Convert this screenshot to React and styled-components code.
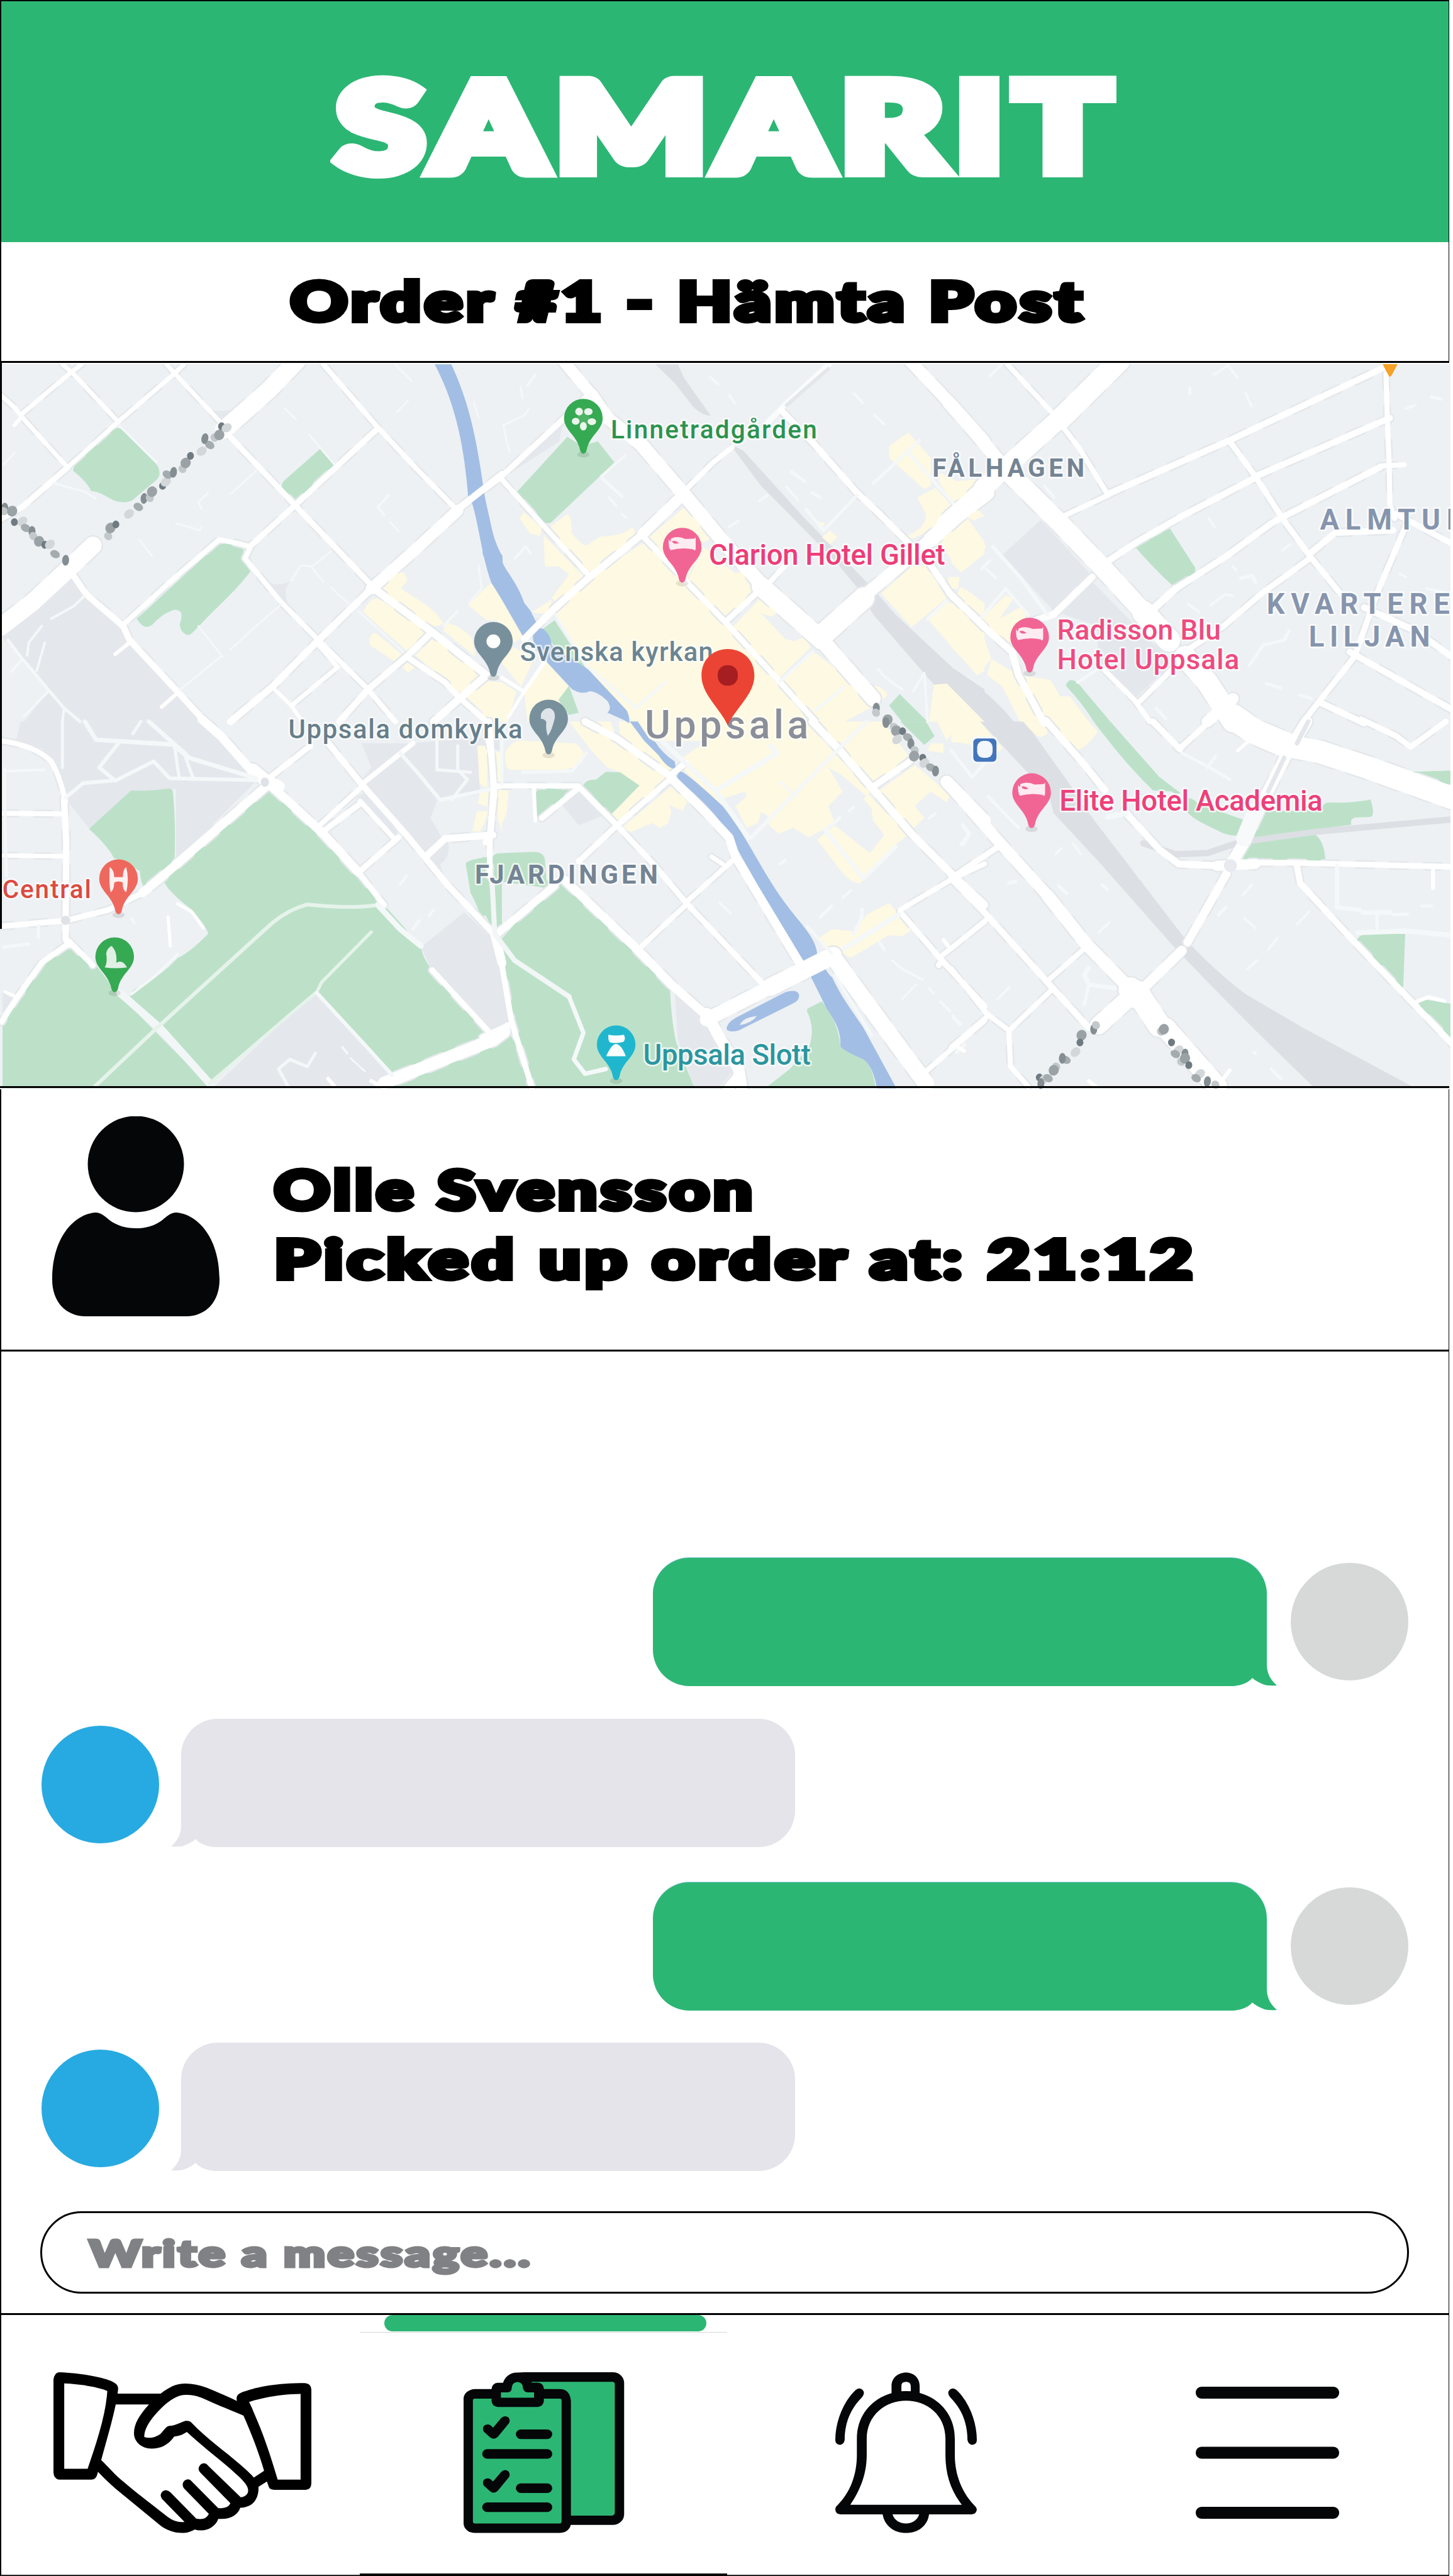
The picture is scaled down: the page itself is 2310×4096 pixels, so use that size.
import React, { useLayoutEffect, useRef, useState } from "react";
import styled, { createGlobalStyle } from "styled-components";

const GREEN = "#2cb674";
const INK = "#050608";

const GlobalStyle = createGlobalStyle`
  * { box-sizing: border-box; }
  body { margin: 0; background: #fff; }
`;

const Screen = styled.main`
  width: 2310px;
  height: 4096px;
  display: flex;
  flex-direction: column;
  background: #fff;
  overflow: hidden;
  font-family: Lato, "Open Sans", sans-serif;
`;

const Section = styled.section`
  width: 2304px;
  flex: none;
  border-left: 2px solid #000;
  border-right: 1px solid #000;
`;

const Header = styled(Section)`
  height: 385px;
  border-top: 2px solid #000;
  background: ${GREEN};
  padding: 102px 0 0 533px;
`;

const OrderBar = styled(Section)`
  height: 192px;
  border-bottom: 3px solid #000;
  padding: 29px 0 0 460px;
`;

const Stretch = styled.div`
  width: max-content;
  white-space: nowrap;
  transform-origin: 0 50%;
  font-weight: 900;
  font-size: ${(p) => p.$size}px;
  line-height: ${(p) => p.$line}px;
  color: ${(p) => p.$color};
  -webkit-text-stroke: ${(p) => p.$stroke}px ${(p) => p.$color};
  letter-spacing: ${(p) => p.$spacing || 0}px;
`;

/* Heavy display text, widened to the given width. */
function Display({ width, size, line, color = "#000", stroke, spacing, children }) {
  const ref = useRef(null);
  const [scale, setScale] = useState(1);
  useLayoutEffect(() => {
    setScale(width / ref.current.offsetWidth);
  }, [width]);
  return (
    <Stretch
      ref={ref}
      $size={size}
      $line={line}
      $color={color}
      $stroke={stroke}
      $spacing={spacing}
      style={{ transform: `scaleX(${scale})` }}
    >
      {children}
    </Stretch>
  );
}

/* ---------- map ---------- */

const MapSection = styled.section`
  position: relative;
  flex: none;
  width: 2306px;
  height: 1153px;
  margin-top: 2px;
  margin-bottom: 0;
`;

const MapCanvas = styled.svg`
  display: block;
  width: 2306px;
  height: 1153px;
`;

const MapEdge = styled.div`
  position: absolute;
  left: 0;
  bottom: 2px;
  width: 2304px;
  height: 3px;
  background: #000;
`;

const MapSide = styled.div`
  position: absolute;
  left: 0;
  top: -2px;
  width: 3px;
  height: 900px;
  background: #000;
`;

const W = "#ffffff";
const P = "#f5f8f9";
const G = "#e6f3eb";

const tiles = [
  {
    x: 0, y: 920, sy: 0.6059,
    lav: [
      "M8 1200L200 975Q220 960 230 975L385 1165L405 1230L640 1568L75 1568L150 1440L110 1350L8 1210Z",
      "M640 230Q690 250 740 230L700 280Z",
      "M835 970Q870 995 910 965Q880 1000 900 1065L860 1040Z",
    ],
    rail: [],
    green: [
      "M365 312Q375 312 385 325L487 465Q500 485 498 515Q495 530 480 545L415 620Q400 635 370 628C340 620 320 585 285 583C275 550 250 520 228 495Q230 475 245 455L355 320Z",
      "M1000 402Q1040 445 1043 475C1010 500 970 580 935 612Q920 625 905 605L880 565Q878 550 890 535Z",
      "M705 806Q730 808 761 833C755 870 760 890 783 925C730 1020 690 1060 625 1155C600 1190 595 1200 583 1197Q560 1180 562 1150Q570 1115 565 1100Q550 1080 530 1098Q500 1115 475 1155Q450 1180 427 1128C500 1040 590 920 670 825Q685 807 705 806Z",
    ],
    yellow: [
      "M1250 925Q1275 940 1270 970L1252 998C1320 1060 1365 1090 1385 1150Q1360 1165 1340 1155L1193 1010Q1200 970 1250 925Z",
      "M1180 1040L1338 1180L1270 1265L1135 1100Q1150 1045 1180 1040Z",
      "M1175 1190L1255 1280L1232 1310L1155 1240Q1150 1190 1175 1190Z",
      "M1297 1285L1355 1208L1515 1345L1440 1450L1370 1365Z",
      "M1395 1145Q1440 1160 1475 1210L1485 1290L1385 1180Z",
      "M1275 1315L1300 1330L1275 1360L1257 1335Z",
      "M1455 1460L1500 1400H1568V1460L1530 1480L1535 1515L1515 1535Z",
      "M1530 980L1568 1050V1135L1520 1135L1490 1100L1462 1070L1500 1020Z",
    ],
    water: [
      "M1358 40H1410C1460 190 1485 320 1510 565C1520 660 1540 800 1570 860V1050L1535 975C1505 860 1495 720 1475 635L1462 600C1450 380 1420 200 1358 40Z",
    ],
    roads: [
      [7, "195,40 225,75 365,280", W], [7, "255,40 222,75 70,250", W], [7, "5,175 45,225 68,265 210,480", W],
      [6, "68,265 45,300", W],
      [7, "520,40 545,78 690,290", W], [7, "575,40 545,80 370,285 212,480", W], [9, "212,480 70,650 5,700", W],
      [28, "928,25 840,150 700,320", W], [10, "280,800 215,915", P], [28, "290,815 210,920 100,1060 0,1165", W],
      [9, "690,290 705,330 920,640 1160,985", W], [12, "1160,990 1350,1185 1520,1370", W],
      [8, "1010,40 1180,310 1300,485 1425,660", W],
      [9, "1180,315 1050,480 920,645 780,820", W], [8, "780,820 740,805 685,790 540,960 380,1160", W],
      [8, "780,830 765,870 880,1060 995,1220 1150,1430 1235,1568", W],
      [11, "1570,510 1430,660", W], [18, "1430,665 1300,830 1160,1000", W], [11, "1160,1000 995,1220 850,1420 720,1568", W],
      [10, "230,945 270,1025 385,1160 405,1220 555,1440 640,1568", W], [6, "405,1230 360,1280", W], [6, "555,1445 505,1505", W],
      [6, "850,1420 910,1500 945,1568", W], [7, "995,1240 1055,1335 910,1500", W],
      [12, "1520,1370 1435,1470 1355,1568", W], [9, "1270,1290 1390,1400 1435,1465 1520,1568", W],
      [10, "1350,1185 1270,1290 1150,1430 1060,1568", W],
      [5, "25,1220 70,1300 150,1430 200,1510 250,1568", P], [4, "200,1510 195,1568", P], [4, "85,1285 90,1230 130,1160", P],
      [4, "115,1350 140,1230", P], [4, "160,1128 230,1075 265,1030", P], [4, "150,1440 75,1545", P], [4, "70,1300 35,1355", P],
      [3, "720,1260 800,1160 880,1065", P], [3, "690,1290 560,1435", P], [3, "620,1160 695,1290", P],
      [3, "370,300 490,460", P], [3, "165,548 265,585 300,615", P], [3, "720,595 805,490", P], [3, "965,340 1045,470", P],
      [3, "910,965 940,900 975,905 1035,840", P], [3, "975,910 1010,970", P], [3, "1035,995 1090,1065", P],
      [3, "550,720 625,750 630,735", P], [3, "1120,1095 1260,1270", P], [4, "1385,1160 1430,1095", P],
      [3, "1495,900 1505,1000 1465,1060", P], [3, "1235,40 1285,110", P], [3, "435,790 475,860", P],
      [3, "890,230 925,275", P], [3, "1275,195 1240,245", P], [3, "650,590 620,630 630,660", P], [4, "1215,600 1180,650 1200,685", P],
      [3, "10,470 45,420", P], [3, "1220,715 1245,755", P], [3, "1480,200 1495,270", P],
    ],
    blobs: "15,655 12,668 38,668 45,715 70,712 80,740 100,755 104,775 122,797 140,812 156,810 172,852 205,878 338,775 345,740 362,725 403,680 432,650 450,614 468,612 475,585 508,560 518,543 523,512 542,502 570,488 580,462 595,432 630,412 655,385 640,358 670,354 685,342 692,305 708,312",
  },
  {
    x: 1250, y: 920, sy: 0.6059,
    lav: ["M250 295L240 370L70 520L200 350Z"],
    rail: [
      "M540 40H610L630 100L713 260Q690 262 660 225L600 120Z",
      "M770 378L815 410L1000 690L1085 810L1220 1000L1290 1110L1470 1340L1568 1430V1568H1510L1220 1110L1180 1010L1100 880L1000 740L870 560Z",
    ],
    green: [
      "M265 350L310 390L360 370L412 460L215 715Q203 725 192 715L108 585Z",
      "M225 1135L325 1345Q300 1345 270 1310L180 1180Z",
      "M270 1415L300 1530L270 1540L237 1475Z",
      "M1303 1450L1390 1568H1310L1270 1500Z",
    ],
    yellow: [
      "M500 805L520 810L630 960L765 1160L1005 1540L1010 1568H470L330 1340L225 1110L330 960Z",
      "M635 645L725 780L690 800L640 960L520 780Z",
      "M690 820L790 935L830 915L858 1000L765 1125L640 970Z",
      "M875 1030L920 1100L905 1120L870 1105L945 1215L975 1225L1005 1205L1025 1250L925 1385L780 1165Z",
      "M1030 1265L1160 1400L1180 1430L1225 1500L1130 1568H1040L930 1395Z",
      "M130 672L185 740L180 775L150 765L115 700Z",
      "M265 680Q280 700 278 760Q310 815 325 815L370 775Q430 780 470 735L480 780L325 940L215 760L215 730Z",
      "M190 770L325 960L235 1060L215 1040L270 940L240 905L195 905Z",
      "M215 1045L210 1110L155 1100Z",
      "M1330 332L1355 370L1400 440L1400 560L1380 575L1270 440L1270 390Z",
      "M1430 505L1480 540L1568 530V590L1480 660L1425 540Z",
      "M1415 568L1475 660L1400 750L1320 800L1315 780Q1390 740 1385 680L1358 610Z",
      "M1515 700L1568 800V850L1495 930L1423 800L1500 720Z",
      "M1385 900L1450 1040L1340 1165L1245 1020L1340 905Z",
      "M1450 1050L1568 1190V1350L1545 1370L1393 1135Z",
      "M1490 995L1568 1060V1120L1490 1030Z", "M1455 950H1490L1485 1000H1455Z", "M1540 655L1568 690L1530 705Z",
      "M0 1010L30 975L125 1205L100 1230L50 1145L0 1100Z",
      "M130 1440L200 1310L275 1430L237 1475L265 1568H140Z",
      "M0 1395L60 1400L105 1440L80 1568H0Z", "M50 1300L100 1250L160 1300L120 1420Z",
      "M1215 1415Q1240 1410 1265 1450L1235 1500Z", "M1410 1410L1450 1405L1568 1568H1395Z",
      "M1085 750L1108 780L1085 810L1060 780Z", "M1040 710L1070 720L1055 750Z",
    ],
    water: [
      "M0 550L5 600C25 700 35 830 75 920C105 980 120 1020 130 1060L150 1095L170 1150L127 1205L30 975C15 920 5 860 0 850Z",
      "M157 1200Q165 1160 190 1172Q215 1200 215 1240L330 1345L450 1520Q460 1545 458 1575L440 1560L390 1530Q405 1510 390 1480Q360 1440 335 1438Q310 1455 280 1430L205 1320L160 1250Z",
    ],
    roads: [
      [18, "255,30 340,170", W], [20, "340,170 390,270 500,390", W], [22, "500,390 625,590 740,780 870,980", W],
      [30, "870,990 1060,1220", W], [24, "1060,1220 1220,1470", W],
      [9, "0,580 55,525 240,290 320,185", W], [8, "55,525 200,745 330,940", W],
      [17, "625,600 500,765", W], [11, "500,765 330,955 220,1090 130,1215", W],
      [9, "500,775 630,960 760,1145 920,1385 1040,1568", W], [9, "870,1000 760,1140", W],
      [8, "625,590 720,460 780,395", W],
      [9, "1090,30 940,220 890,290", "#fafcfc"], [6, "1080,60 950,215", "#e3e7ea"],
      [10, "935,240 1035,380 1170,590 1240,680 1320,790 1390,880 1460,1020 1568,1160", W],
      [19, "1335,25 1480,235 1568,370", W],
      [24, "1575,590 1480,690 1400,790", W], [20, "1400,790 1210,1010", W], [34, "1190,1040 1060,1200", W],
      [8, "885,990 945,900", W],
      [5, "1220,550 1330,410 1365,365", P], [5, "1325,410 1480,650", P], [5, "1170,600 1065,750 1010,660", P], [5, "930,1395 1030,1270", P],
      [5, "375,530 435,605", P], [4, "370,520 445,430", P], [5, "325,1330 480,1510", P], [5, "480,1510 570,1400", P],
      [5, "1040,1520 1130,1420", P], [6, "60,1380 130,1440 195,1310", W], [5, "130,1440 80,1550", W],
      [5, "1450,1050 1390,1130", P], [4, "225,1105 325,1330", P],
      [4, "165,85 140,130", P], [3, "118,135 125,185", P], [3, "65,300 130,260 145,230", P], [3, "65,300 75,370 85,415", P],
      [4, "770,170 788,208", P], [4, "710,95 735,125", P], [4, "1160,165 1188,205", P], [4, "1225,258 1255,298", P], [4, "1345,1440 1380,1360 1390,1568", P],
      [4, "1235,1345 1260,1380 1310,1430", P], [4, "395,610 418,645", P], [4, "435,680 448,695", P], [4, "950,565 985,620", P], [4, "865,625 890,600", P],
      [4, "770,735 800,710", P], [4, "100,870 135,820 150,850", P], [5, "965,500 1005,540", P], [5, "1030,590 1055,610", P],
    ],
    blobs: "1230,1510 1229,1530 1265,1560",
  },
  {
    x: 2464, y: 920, sy: 0.6059,
    lav: ["M280 705L430 930L320 1095L160 855Z", "M440 970L570 1150L480 1170L330 1100Z", "M455 1170L600 1200L700 1310L580 1460L460 1330Z"],
    rail: ["M0 1335Q120 1440 195 1568H85L0 1430Z"],
    green: [
      "M683 742L762 910V932L697 994Q630 910 575 822Z",
      "M375 1390Q390 1392 400 1410L497 1568H445Q410 1490 358 1415Q362 1392 375 1390Z",
    ],
    yellow: [
      "M0 540L30 560L60 540L118 533L90 590L25 640L0 600Z", "M50 700L110 820L30 930L0 890V720Z", "M70 655L92 670L75 710L50 695Z",
      "M30 995Q90 1030 100 1085L90 1125L10 1040Z", "M170 1028L195 1040L150 1130L220 1075L235 1110L185 1230L150 1220L95 1125Z",
      "M0 1045L95 1180L125 1300L85 1368L0 1250Z", "M125 1300L210 1370L300 1568H215L160 1420L112 1368Z",
      "M215 1370L310 1390L340 1460L370 1460L430 1568H300Z",
    ],
    water: [],
    roads: [
      [21, "-10,200 80,340 170,490", W], [30, "170,490 340,720 480,920 600,1100", W], [36, "600,1100 680,1220", W], [34, "730,1290 800,1400 880,1568", W],
      [34, "525,25 340,275", W], [30, "340,270 170,480 100,570", W], [26, "110,560 -20,720", W],
      [8, "175,40 310,240", W], [8, "350,310 400,400 490,600", W], [8, "350,690 490,600", W], [10, "490,595 870,365 1350,55", W],
      [9, "870,370 950,520 1035,700 1120,860 1215,1020", W], [10, "480,890 580,800 720,690 950,525", W], [10, "950,520 1370,270", W],
      [12, "620,1100 700,1000", W], [10, "700,1000 860,860 1000,720 1040,690 1340,480", W], [8, "1340,475 1415,470", W],
      [8, "1358,80 1362,265 1368,470 1370,640 1385,700", W], [10, "1120,850 1200,760 1380,750", W],
      [9, "1120,870 970,1020 850,1160 740,1260", W], [8, "700,1330 590,1480", W],
      [9, "1420,730 1330,1020 1260,1290 1150,1480 1100,1568", W], [9, "1390,680 1568,810", W], [10, "1290,1080 1450,1180 1568,1295", W],
      [10, "1245,1270 1400,1390 1568,1520", W], [10, "1150,1485 1290,1575", W], [11, "440,950 320,1110 230,1150", W],
      [8, "480,1350 575,1480 620,1568", W], [11, "-5,1020 100,1160 190,1270 210,1370 290,1575", W], [18, "880,1470 800,1568", W],
      [5, "1055,1180 1040,1220 975,1240 930,1330", P], [6, "130,820 220,960 300,1110", P], [5, "95,1120 170,1000 240,1110", P], [5, "395,1400 450,1350", P],
      [4, "120,90 155,45", P], [4, "820,85 865,45 895,100", P], [4, "918,160 938,220", P], [4, "290,560 322,610", P], [5, "95,915 120,880", P], [4, "105,910 140,955", P],
      [6, "905,955 940,945 950,970", P], [4, "1035,835 1060,810", P], [4, "810,1070 855,1025 880,1030", P], [4, "740,1065 775,1100", P],
      [4, "805,700 822,735", P], [5, "985,1405 1030,1425", P], [5, "1090,1455 1125,1470", P], [5, "1500,180 1530,190", P], [4, "1420,230 1450,215", P], [5, "745,140 745,165", P],
      [4, "1485,1000 1560,1020", P], [4, "880,905 890,920", P], [4, "1400,935 1420,950", P], [5, "640,1510 670,1555", P],
    ],
    blobs: "",
  },
  {
    x: 0, y: 1870, sy: 0.625,
    lav: [
      "M65 0H640L805 240L550 580V280L410 290L280 445L205 320Q185 180 130 110L50 80Z",
      "M990 1130L1225 1465L1160 1512H670L905 1215Z",
      "M1130 90H1290L1370 310L1345 400L1380 480L1330 545L1130 240L1160 190Z",
      "M1280 90L1560 60V120L1490 100L1500 300L1380 330Z",
      "M1450 790L1540 900L1568 1060V1270H1525L1345 1020L1315 935Z", "M8 1120L40 1150L8 1210Z", "M1115 310L1150 290L1245 460L1220 475Z",
      "M1340 560L1400 495Q1410 560 1375 590L1385 640Z",
    ],
    rail: [],
    green: [
      "M410 285Q450 290 530 278Q540 280 540 295Q550 420 545 580L455 690Q440 680 437 620L400 590L355 565Q340 520 278 445Z",
      "M840 292Q870 295 900 340L1200 760L1315 930Q1320 980 1345 1020L1515 1270Q1525 1290 1515 1300L1225 1460L1180 1400L990 1120L905 1210L655 1490L410 1150Q400 1130 420 1110Q500 1060 555 980Q590 960 650 880Q650 860 600 780Q520 700 510 655L790 315Q815 292 840 292Z",
      "M218 927L300 1010L370 1130L655 1512H8V1250C80 1100 130 980 205 932Z",
      "M1570 1300V1512H1195L1480 1360Z",
      "M1455 590Q1455 575 1525 560L1525 800L1500 810Q1495 770 1470 710Z", "M1537 580Q1540 545 1568 548V870L1550 870Z",
    ],
    yellow: ["M1492 100H1520V265L1498 260Z", "M1540 125H1568V265L1540 235Z", "M1500 285H1530L1520 350L1493 340Z", "M1550 285H1568V460L1555 400Z", "M1490 372H1525L1500 455H1475Z"],
    water: [],
    roads: [
      [14, "630,-10 690,60 780,195 830,245", W], [20, "790,200 835,250 870,270", W], [14, "850,270 900,330 1010,465 1120,625", W], [9, "1120,625 1200,760", W],
      [9, "835,240 970,100", W], [14, "830,270 500,650 445,710", W], [9, "445,710 340,780 250,810 205,825 5,848", W],
      [8, "5,80 Q 110,100 160,165 185,220 205,330", W], [10, "200,320 207,500 205,820 205,900 215,925", W],
      [8, "5,380 40,380 205,383", W], [7, "5,555 205,558", W], [9, "215,920 130,1000 50,1150 5,1245", W], [9, "215,910 290,1010", W], [5, "15,1120 50,1140", W],
      [12, "375,1125 500,1270 655,1500", "#f3f6f7"], [8, "990,440 1130,270", W], [10, "1020,80 1130,260", W], [10, "1130,260 1270,470 1400,680 1550,890", W],
      [8, "1130,260 1290,90", W], [9, "1010,455 1125,340", W], [9, "1125,620 1245,480", W], [8, "1125,330 1235,490", W], [11, "1330,560 1390,485 1540,470", W],
      [9, "1520,40 1535,140 1545,300 1530,470 1530,640", W], [20, "1575,1285 1540,1320 1200,1498", W], [9, "1350,1030 1530,1290", W], [14, "1545,880 1568,1000", W],
      [6, "1250,130 1310,220 1375,325 1568,270", P], [5, "1365,70 1365,200 1470,210", P], [5, "1430,100 1430,200 1460,240 1410,325", P],
      [6, "290,1520 490,1270 850,835 Q 900,780 960,758 1090,776 1170,762", G], [5, "655,1500 905,1215 990,1120 1005,1080 1160,872", G], [6, "990,1125 1140,1340 1225,1465", P],
      [7, "265,0 300,75 540,95 590,150 800,235", P], [7, "465,0 580,135", P], [6, "370,90 310,190 360,245 480,165 530,235 800,243", P], [6, "205,315 260,255 350,245", P],
      [5, "195,0 195,190", P], [5, "545,100 560,235", P], [5, "580,150 605,240", P], [5, "415,50 440,0", P], [5, "15,195 15,380 20,640", P], [4, "20,205 140,200", P],
      [9, "1180,760 1250,860 1315,930", P], [5, "555,755 600,790 635,855", W], [5, "525,810 532,930", W], [5, "900,1512 870,1440 905,1400 960,1430 985,1375", P], [6, "1025,1480 1045,1512", W], [6, "1160,1490 1190,1512", W],
      [3, "1095,1395 1140,1450", P], [4, "1070,1350 1085,1375", P], [4, "1250,675 1270,640", P], [4, "1340,805 1355,780", P], [5, "1290,860 1310,825", P], [5, "120,845 120,895", P], [5, "10,935 90,922", P], [4, "410,815 420,835", P],
      [4, "410,1130 480,1060 555,965", P],
    ],
    blobs: "",
  },
  {
    x: 1250, y: 1870, sy: 0.625,
    lav: ["M600 1110L700 1230L750 1330L790 1440L740 1512H660L610 1320Z", "M245 340L295 280L375 390L300 430Z", "M0 885L50 960L85 1240L20 1285L0 1260Z"],
    rail: [],
    green: [
      "M165 300Q170 275 190 275L285 285L190 395H170Z", "M315 265Q320 240 355 240L385 208L430 210L490 265L400 387Z",
      "M30 570Q30 545 60 545L160 540Q195 540 195 580L200 660L260 670L585 1095Q590 1250 605 1330L660 1512H165L100 1330L85 1200L60 900L200 690L40 660Z",
      "M0 655L20 660L40 880L0 780Z", "M0 1330L75 1270L100 1330L145 1512H0Z",
      "M1015 1190L1060 1160Q1110 1240 1118 1345Q1180 1390 1190 1400Q1215 1420 1228 1512H890L960 1440L1020 1350Q1040 1270 1013 1200Z", "M1305 0H1385L1412 60L1380 97Z", "M0 560L15 570V590H0Z",
    ],
    yellow: [
      "M70 130Q90 70 140 80L290 90Q330 130 310 170Q280 200 240 200H85Q68 190 70 130Z", "M50 285H82L75 380L55 440Z", "M0 120H15V270H0Z", "M0 290H28V350H0Z", "M0 370L18 375L0 440Z",
      "M270 0H400L420 80L575 235L425 420L400 390L490 265L430 210L390 190L340 120Z",
      "M595 262L640 330L625 370L580 345L590 370L580 420L555 442L530 420L460 460L440 435Z", "M425 0H460L600 195L590 215L430 60Z",
      "M625 150L700 80H500L480 0H1010L1210 290L1200 310L1120 220L1080 190L1125 290L1080 350L1100 420L1020 480L970 440L925 465L895 430L890 390L870 375L860 420L825 440L790 350L825 310L820 290L750 320L748 350L620 190Z",
      "M1040 0H1250L1330 140L1240 250L1215 245Z", "M1240 285L1350 180L1460 300L1450 335L1400 290L1350 350L1380 400L1340 450Z",
      "M1205 300L1330 470L1290 510L1180 670Q1150 670 1120 620L1045 490L1100 430L1210 545L1255 470L1220 410L1215 360L1190 320Z",
      "M1050 900L1090 860L1160 870L1200 800L1270 752L1335 850V870L1310 890L1270 885L1150 980L1110 950L1070 950Z",
      "M275 1140Q300 1090 330 1155Q380 1110 388 1170L385 1215L400 1250L450 1450L490 1475L500 1512H265Q275 1460 235 1360L255 1300L245 1190Z",
      "M1400 90H1440V130L1390 120Z", "M1420 0H1540L1568 30V80L1500 80L1480 20L1450 80Z",
    ],
    water: [
      "M460 0H485L520 70L540 85Q560 130 600 165L604 195Q580 200 550 140L505 80Z",
      "M620 207Q640 215 750 350C830 480 870 620 950 760C1000 850 1045 900 1046 975Q1020 1000 1005 1001Q990 995 980 970C900 780 830 600 765 460C720 360 660 300 608 235Q607 210 620 207Z",
      "M1022 1048L1067 1014Q1080 1050 1092 1060C1120 1140 1150 1190 1190 1270L1293 1520H1232Q1220 1430 1190 1400Q1120 1360 1118 1345C1120 1280 1100 1240 1075 1190Z",
      "M762 1275Q762 1250 790 1228L945 1122Q985 1105 989 1135Q990 1155 970 1168L800 1280Q770 1290 762 1275ZM803 1258Q840 1250 857 1220Q815 1225 803 1258Z",
    ],
    roads: [
      [11, "320,0 420,70 585,225", W], [10, "585,225 635,170", W], [14, "590,235 700,380 770,480 790,560 990,1000 1005,1030", W],
      [9, "585,240 420,430 300,580", W], [9, "300,270 420,430 540,600 635,750 770,940 885,1100", W], [8, "635,750 790,565", W], [8, "635,760 490,940", W],
      [12, "225,680 45,880", W], [14, "255,655 480,940 590,1090 700,1220", W], [18, "700,1210 740,1310 800,1440 810,1520", W], [22, "700,1235 900,1100", W], [28, "900,1100 1020,1020 1095,970", W],
      [26, "1095,975 1180,1130 1385,1500", W], [12, "1030,0 1110,110 1220,280 1340,465 1475,645 1568,760", W], [10, "1220,270 1335,165", W],
      [8, "1568,590 1470,650 1305,780", W], [9, "1305,790 1435,990 1568,1180", W], [8, "1435,970 1568,830", W], [8, "1568,1240 1385,1450", W], [9, "1425,1010 1435,990", W],
      [20, "1450,250 1568,410", W], [10, "20,0 35,270 25,460 10,500", W], [8, "40,266 300,266", W], [6, "160,275 165,410", W], [9, "185,400 300,275", W], [5, "60,80 60,260", P],
      [9, "0,830 45,890 90,1240 155,1520", W], [10, "0,1310 80,1260", W], [8, "30,670 38,880 100,990 270,1140", "#f2f6f6"], [7, "270,1140 315,1290 285,1400 320,1460 385,1440", P], [16, "765,1525 800,1470", W],
      [8, "560,80 730,290 830,480", P], [8, "730,285 920,130 900,100", P], [6, "840,480 1100,130 1200,0", P], [7, "1070,450 1190,650 1290,520", P], [6, "1070,450 1115,400", P], [8, "1130,940 1300,800", P], [7, "750,590 715,560", W],
      [4, "930,250 980,310", P], [4, "1280,990 1310,1025 1375,1070", P], [3, "1355,1090 1310,1150", P], [4, "1430,1160 1460,1200", P], [4, "1395,1105 1408,1125", P], [4, "740,750 775,795", P], [5, "1055,810 1090,765", P],
      [5, "1100,1050 1215,1300", P], [6, "1500,430 1520,465 1500,510", P], [4, "1125,730 1150,700", P], [6, "1185,780 1185,810 1160,880", P], [5, "930,590 945,575", P], [6, "1440,905 1460,940", W], [5, "1470,1225 1495,1255", P], [6, "1480,1370 1505,1340", P],
      [5, "125,210 280,205 325,130", P], [5, "1015,850 1090,960", P], [5, "1240,915 1255,945", P], [4, "1145,370 1160,355", P], [4, "1395,400 1415,380", P],
    ],
    blobs: "1260,4 1285,22 1292,38 1312,40 1295,74 1328,65 1338,92 1350,118 1348,143 1375,150 1380,172 1400,190 1415,205",
  },
  {
    x: 2464, y: 1870, sy: 0.625,
    lav: [],
    rail: ["M90 0H230L370 260L430 380L730 900Q820 1030 920 1130L1100 1270L1440 1512H1130Q900 1220 700 940L460 580L320 380L300 280L230 200Z"],
    green: [
      "M445 0H497L650 230L715 295Q705 310 690 290L630 285Q540 170 445 0Z", "M735 320Q750 310 770 340L920 410L900 470Q870 480 830 450Q745 400 735 370Z",
      "M975 370H1155Q1160 335 1180 335Q1250 340 1310 323Q1325 390 1310 395L1260 398Q1245 405 1250 427L945 480Z",
      "M925 505L1120 460Q1160 470 1168 560Q1170 580 1155 582Q1050 570 915 574Q905 565 925 505Z",
      "M1375 213Q1390 205 1400 210L1562 203V303Q1540 305 1375 213Z", "M1265 910Q1275 880 1300 880H1418L1412 1100L1400 1107Z", "M1453 1180Q1460 1150 1480 1152L1562 1170V1340Z",
    ],
    yellow: ["M0 0H90L160 110L150 125L40 90L0 85Z", "M225 0H300V50L280 65Q260 60 225 0Z", "M305 0H430L458 40Q430 100 390 122Z"],
    water: [],
    roads: [
      [10, "600,505 700,550 800,545 900,500 1150,455 1568,405", "#dcdfe3"],
      [18, "-5,265 150,500 300,720", W], [20, "300,720 420,920 560,1110", W], [38, "560,1110 580,1140", W], [36, "580,1120 650,1260", W], [32, "670,1270 830,1512", W],
      [9, "150,515 10,640", W], [10, "0,650 110,800 300,1080", W], [10, "300,1080 430,1270", W], [8, "115,815 0,940", W], [8, "425,930 305,1070", W], [8, "315,1110 185,1275", W],
      [8, "0,1025 110,1210 180,1280 185,1430 240,1512", W], [8, "110,1225 0,1350", W], [28, "560,1140 460,1260", W], [16, "600,1105 720,950", W], [13, "738,915 860,630", W],
      [11, "295,-5 410,170 480,285", W], [11, "540,370 650,530 710,590 840,598", W], [10, "630,0 715,115", W], [9, "715,110 810,-5", W],
      [40, "880,-20 945,40 1050,100", W], [36, "1050,100 1150,125 1300,190 1568,318", W], [18, "1110,0 1050,130 985,300 915,500 870,600", W], [7, "1115,0 1080,90", "#e3e6ea"], [7, "1040,150 990,290", "#e3e6ea"],
      [26, "950,370 915,485", "#f7f9fa"], [16, "830,598 950,590", W], [9, "950,585 1060,585 1568,602", W],
      [10, "1080,600 1090,670 1250,900 1430,1150 1568,1340", W], [9, "1280,-10 1390,60 1435,105 1545,0", W], [8, "1270,875 1420,868 1560,885", P], [7, "1205,600 1205,770 1275,780", P], [6, "1505,600 1505,690", W],
      [9, "490,395 545,380", P], [5, "720,130 800,185 870,240", P], [5, "800,190 825,145", P], [5, "895,120 930,80", W], [7, "1285,792 1370,790", P], [5, "1330,790 1330,855", P], [5, "1380,800 1425,798", P], [5, "1470,765 1500,765", P],
      [7, "430,1020 415,1050 430,1090 510,1105", P], [5, "430,1090 415,1175", P], [4, "915,815 950,855", P], [4, "380,505 405,550", P], [4, "325,550 345,525", P], [4, "910,720 940,675", P], [4, "1080,840 1118,788", P], [4, "990,945 1020,895", P],
      [4, "925,1025 955,990", P], [4, "460,875 495,830", P], [4, "145,1150 182,1100", P], [5, "835,800 858,770", P], [5, "335,680 360,712", P], [5, "1000,1440 1030,1480", P], [6, "180,670 200,662", P], [5, "115,310 210,440", P], [5, "35,430 55,465 30,510", P],
      [5, "0,120 65,230 110,165", P], [5, "5,1220 25,1255", P], [6, "20,1350 40,1365", W], [5, "470,675 488,695", P], [6, "430,1490 450,1512", W], [5, "945,1370 950,1375", P], [6, "850,1480 870,1445", W], [6, "1455,1160 1490,1142 1540,1158", W],
    ],
    blobs: "445,1275 452,1258 407,1300 402,1330 388,1370 358,1402 347,1396 328,1430 320,1445 275,1475 290,1482 302,1478 280,1500 655,1285 664,1275 688,1330 710,1362 700,1378 730,1378 718,1410 730,1396 742,1424 777,1460 765,1478 800,1492 825,1505",
  },
];

const SX = 0.8291;
const blobInk = ["#848e92", "#c3c8cb", "#9aa2a6", "#6f7b82", "#d3d7d9", "#a5acb0"];

function roadPath(pts) {
  return "M" + pts;
}

function Layer({ pick, fill }) {
  return tiles.map((t, i) => (
    <g key={i} transform={`translate(${t.x} ${t.y}) scale(${SX} ${t.sy})`} fill={fill} fillRule="evenodd">
      {t[pick].map((d) => <path key={d} d={d} />)}
    </g>
  ));
}

function Roads({ shade }) {
  return tiles.map((t, i) => (
    <g key={i} transform={`translate(${t.x} ${t.y}) scale(${SX} ${t.sy})`} fill="none" strokeLinecap="round" strokeLinejoin="round">
      {t.roads
        .filter((r) => !shade || (r[2] === W && r[0] > 6))
        .map((r, k) => (
          <path
            key={k}
            d={roadPath(r[1])}
            stroke={shade ? "#e4e8eb" : r[2]}
            strokeWidth={shade ? r[0] + 5 : r[0]}
            strokeDasharray={shade ? "24 30" : undefined}
            vectorEffect="non-scaling-stroke"
          />
        ))}
    </g>
  ));
}

function Blobs() {
  return tiles.map((t, i) =>
    t.blobs
      ? t.blobs.split(" ").map((s, k) => {
          const [a, b] = s.split(",").map(Number);
          const x = t.x + a * SX;
          const y = t.y + b * t.sy;
          return (
            <ellipse
              key={`${i}-${k}`}
              cx={x}
              cy={y}
              rx={9 + (k % 3) * 2}
              ry={14 - (k % 2) * 4}
              fill={blobInk[k % blobInk.length]}
              transform={`rotate(${(k * 47) % 70} ${x} ${y})`}
            />
          );
        })
      : null
  );
}

const BED = "M-35 -113Q-33 -107 -30 -107L-29 -114Q-12 -122 8 -113L31 -114Q33 -114 35 -118V-88Q33 -80 29 -86Q0 -92 -30 -84Q-36 -90 -35 -113Z";

const pins = [
  { x: 1511, y: 1176, fill: "#36a953", art: "flower" },
  { x: 1767, y: 1510, fill: "#f16594", art: "bed" },
  { x: 1278, y: 1754, fill: "#78909c", art: "dot" },
  { x: 1421, y: 1955, fill: "#78909c", art: "statue" },
  { x: 2667, y: 1743, fill: "#f16594", art: "bed" },
  { x: 2672, y: 2146, fill: "#f16594", art: "bed" },
  { x: 307, y: 2369, fill: "#ef685e", art: "hospital" },
  { x: 297, y: 2571, fill: "#36a953", art: "park" },
  { x: 1596, y: 2799, fill: "#20b7ce", art: "castle" },
];

function PinArt({ kind }) {
  if (kind === "bed") return <g><path d={BED} fill="#fdecf2" /><path d="M-30 -105Q-20 -113 -8 -102Q-24 -98 -26 -107Z" fill="#f16594" /></g>;
  if (kind === "dot") return <ellipse cx="0" cy="-92" rx="18" ry="18" fill="#fcfdfd" />;
  if (kind === "hospital") return <path d="M-23 -122Q-12 -116 -11 -96H11Q12 -118 20 -122Q28 -90 20 -57Q10 -62 11 -82Q0 -88 -11 -82Q-12 -62 -20 -57Q-25 -70 -23 -122Z" fill="#fdf1f0" />;
  if (kind === "park") return <path d="M-8 -120Q8 -104 4 -76Q20 -86 32 -64Q0 -60 -26 -64Q-18 -76 -22 -100Q-20 -114 -8 -120Z" fill="#e0f0e4" />;
  if (kind === "castle") return <g fill="#fafdfe"><path d="M-20 -118Q0 -114 20 -118Q26 -106 18 -99Q0 -94 -16 -98Q-22 -104 -20 -118Z" /><path d="M-26 -62Q-12 -94 0 -94Q14 -92 25 -62Z" /></g>;
  if (kind === "statue") return <path d="M-20 -104Q-14 -120 2 -120Q18 -116 16 -94Q8 -60 -2 -48Q-8 -64 -6 -84Q-10 -92 -20 -92Z" fill="#dfe4e9" />;
  return (
    <g>
      <circle cx="0" cy="-91" r="16" fill="#4fb366" />
      <g fill="#eaf6ec">
        <ellipse cx="-11" cy="-109" rx="10" ry="10" /><ellipse cx="13" cy="-109" rx="11" ry="9" />
        <ellipse cx="-20" cy="-84" rx="10" ry="9" /><ellipse cx="22" cy="-83" rx="11" ry="9" /><ellipse cx="0" cy="-71" rx="9" ry="11" />
      </g>
    </g>
  );
}

const labels = [
  { t: "Linnetradgården", x: 1582, y: 1136, w: 534, s: 66, c: "#2c934f" },
  { t: "Clarion Hotel Gillet", x: 1836, y: 1463, w: 612, s: 74, c: "#ed3d78" },
  { t: "Svenska kyrkan", x: 1347, y: 1713, w: 500, s: 68, c: "#6b8591" },
  { t: "Uppsala domkyrka", x: 747, y: 1914, w: 606, s: 68, c: "#667f8b" },
  { t: "Uppsala", x: 1670, y: 1914, w: 424, s: 102, c: "#8a8f99", b: 500 },
  { t: "FÅLHAGEN", x: 2415, y: 1236, w: 394, s: 66, c: "#748494", b: 700 },
  { t: "FJARDINGEN", x: 1230, y: 2289, w: 474, s: 68, c: "#748494", b: 700 },
  { t: "ALMTUN", x: 3419, y: 1373, w: 380, s: 74, c: "#8695ad", b: 700 },
  { t: "KVARTERE", x: 3281, y: 1591, w: 474, s: 74, c: "#8695ad", b: 700 },
  { t: "LILJAN", x: 3390, y: 1676, w: 314, s: 74, c: "#8695ad", b: 700 },
  { t: "Radisson Blu", x: 2738, y: 1658, w: 424, s: 72, c: "#ee4b80" },
  { t: "Hotel Uppsala", x: 2738, y: 1734, w: 472, s: 72, c: "#ee4b80" },
  { t: "Elite Hotel Academia", x: 2744, y: 2100, w: 682, s: 74, c: "#ed4079" },
  { t: "Central", x: 6, y: 2328, w: 230, s: 66, c: "#dc4a40" },
  { t: "Uppsala Slott", x: 1666, y: 2759, w: 434, s: 74, c: "#2a969f" },
];

const MapLabel = styled.text`
  font-family: Roboto, "Open Sans", sans-serif;
  font-weight: ${(p) => p.$weight};
  font-size: ${(p) => p.$size}px;
  fill: ${(p) => p.$color};
  stroke: #ffffffb0;
  stroke-width: 9px;
  stroke-linejoin: round;
  paint-order: stroke;
`;

function CityMap() {
  return (
    <MapCanvas viewBox="0 944 3757 1878.5" preserveAspectRatio="none">
      <rect x="0" y="944" width="3757" height="1879" fill="#edf1f4" />
      <Layer pick="lav" fill="#e4e7ec" />
      <Layer pick="rail" fill="#dcdfe3" />
      <Layer pick="yellow" fill="#fef9e2" />
      <Layer pick="green" fill="#bce1c8" />
      <Roads shade />
      <Layer pick="water" fill="#a3bee4" />
      <Roads />
      <ellipse cx="686" cy="2027" rx="11" ry="12" fill="#dfe3e7" />
      <ellipse cx="170" cy="2385" rx="12" ry="12" fill="#dfe3e7" />
      <ellipse cx="3187" cy="2243" rx="17" ry="17" fill="#e8eaef" />
      <Blobs />
      <rect x="2516" y="1908" width="68" height="70" rx="12" fill="#f5f8fb" />
      <rect x="2521" y="1914" width="60" height="60" rx="10" fill="#4375bb" />
      <rect x="2531" y="1920" width="40" height="44" rx="16" fill="#f3f6fb" />
      {labels.map((l) => (
        <MapLabel key={l.t + l.x} x={l.x} y={l.y} textLength={l.w} lengthAdjust="spacing" $weight={l.b || 500} $size={l.s} $color={l.c}>
          {l.t}
        </MapLabel>
      ))}
      {pins.map((p) => (
        <g key={`${p.x}-${p.y}`} transform={`translate(${p.x} ${p.y})`}>
          <ellipse cx="0" cy="2" rx="16" ry="8" fill="#00000018" />
          <path d="M0 0C-6 0 -9 -8 -10 -16C-20 -50 -50 -62 -50 -92A50 50 0 1 1 50 -92C50 -62 20 -50 10 -16C9 -8 6 0 0 0Z" fill={p.fill} />
          <PinArt kind={p.art} />
        </g>
      ))}
      <path d="M1885 1880C1865 1835 1817 1800 1817 1751C1817 1708 1848 1682 1885 1682C1922 1682 1954 1708 1954 1751C1954 1800 1905 1835 1885 1880Z" fill="#ec4434" />
      <rect x="1859" y="1724" width="52" height="53" rx="24" fill="#a61e22" />
      <path d="M3581 944H3620L3604 974Q3600 979 3596 972Z" fill="#f6a128" />
    </MapCanvas>
  );
}

/* ---------- courier ---------- */

const Courier = styled(Section)`
  height: 417px;
  border-bottom: 3px solid #000;
  display: flex;
  padding: 43px 0 0 80px;
  gap: 86px;
`;

const Avatar = styled.svg`
  display: block;
  flex: none;
  width: 268px;
  height: 320px;
`;

const CourierText = styled.div`
  padding-top: 60px;
`;

/* ---------- chat ---------- */

const Chat = styled(Section)`
  height: 1532px;
  border-bottom: 3px solid #000;
  padding: 328px 64px 0 62px;
`;

const Message = styled.div`
  height: 204px;
  margin-bottom: ${(p) => p.$after}px;
  display: flex;
  flex-direction: ${(p) => (p.$own ? "row-reverse" : "row")};
  align-items: flex-start;
  gap: ${(p) => (p.$own ? 38 : 35)}px;
  padding: ${(p) => (p.$own ? "0" : "0 0 0 2px")};
`;

const Dot = styled.div`
  flex: none;
  width: 187px;
  height: 187px;
  margin-top: ${(p) => (p.$own ? 8 : 11)}px;
  border-radius: 50%;
  background: ${(p) => (p.$own ? "#d7d9d9" : "#27aae1")};
`;

const Bubble = styled.div`
  position: relative;
  width: 976px;
  height: 204px;
  border-radius: 58px;
  background: ${(p) => (p.$own ? GREEN : "#e4e4ea")};
  box-shadow: ${(p) => (p.$own ? "0 -1px 0 #a9d3ea" : "none")};
`;

const Tail = styled.svg`
  position: absolute;
  bottom: 0;
  ${(p) => (p.$own ? "right: -16px;" : "left: -16px; transform: scaleX(-1);")}
  width: 76px;
  height: 80px;
`;

function ChatMessage({ own, after }) {
  const fill = own ? GREEN : "#e4e4ea";
  return (
    <Message $own={own} $after={after}>
      <Dot $own={own} />
      <Bubble $own={own}>
        <Tail $own={own} viewBox="0 0 76 80">
          <path d="M0 0H60V44Q62 66 76 80H20V60Z" fill="#fff" />
          <path d="M0 0H60V45C60 60 66 70 76 79Q60 80 54 77Q42 72 37 67Q26 80 0 80Z" fill={fill} />
        </Tail>
      </Bubble>
    </Message>
  );
}

const Composer = styled.div`
  height: 131px;
  width: 2176px;
  border: 3px solid #000;
  border-radius: 66px;
  padding: 0 0 0 75px;
  display: flex;
  align-items: center;
`;

/* ---------- navigation ---------- */

const Nav = styled.nav`
  width: 2304px;
  height: 415px;
  flex: none;
  border-left: 2px solid #000;
  border-right: 1px solid #000;
  border-bottom: 2px solid #222;
  display: grid;
  grid-template-columns: repeat(4, 1fr);
`;

const NavItem = styled.div`
  position: relative;
  display: flex;
  justify-content: center;
  padding-top: 91px;
`;

const Active = styled.div`
  position: absolute;
  left: -5px;
  right: -3px;
  top: 0;
  height: 28px;
  border-bottom: 1px solid #d6d8d8;
  display: flex;
  justify-content: center;
  padding-left: 6px;

  &::before {
    content: "";
    width: 512px;
    height: 26px;
    border-radius: 13px;
    background: ${GREEN};
  }
`;

const ActiveFoot = styled.div`
  position: absolute;
  left: -5px;
  right: -3px;
  bottom: -2px;
  height: 4px;
  background: #000;
`;

const NavIcon = styled.svg`
  display: block;
  width: ${(p) => p.$w}px;
  height: ${(p) => p.$h}px;
  margin-top: ${(p) => p.$top || 0}px;
`;

const CHECK = "M1041 968Q1048 968 1053 981L1071 942Q1078 930 1086 940Q1091 952 1087 964L1063 1018Q1054 1032 1046 1018L1033 996Q1028 972 1041 968Z";
const WAVE = "M298 825Q308 827 308 845Q307 853 304 860C280 905 267 960 267 1030Q265 1048 257 1049Q247 1048 247 1030C247 960 263 880 290 832Q294 825 298 825Z";

function Handshake() {
  return (
    <NavIcon viewBox="113 761 551 639" preserveAspectRatio="none" $w={410} $h={256}>
      <path d="M125 761C170 764 215 780 235 795C248 806 252 815 251 830L250 846L342 846C360 820 375 806 395 806C410 806 425 812 440 822C465 841 485 857 505 875C502 855 508 845 520 838C550 818 590 804 650 804Q664 806 664 830L664 1200Q664 1226 652 1228L585 1228Q574 1226 573 1215L569 1195L551 1216C552 1250 545 1275 535 1287C528 1295 520 1299 512 1299C508 1325 492 1347 465 1343C460 1370 445 1389 428 1389Q420 1389 415 1385C405 1395 398 1399 388 1399C370 1399 352 1385 342 1370L245 1222C230 1198 218 1175 208 1156C206 1175 203 1186 195 1187L125 1187Q114 1185 113 1160L113 790Q115 763 125 761Z" />
      <g fill="#fff">
        <path d="M136 805C170 808 205 818 228 835C225 930 205 1040 186 1144L136 1144Z" />
        <path d="M246 889L317 889C297 930 285 965 285 1003C285 1035 300 1064 323 1064C345 1064 360 1045 371 1016C383 1014 390 1007 398 998C425 1045 460 1095 490 1143C510 1177 529 1205 529 1230C529 1245 522 1256 513 1257L444 1133Q440 1122 434 1122Q425 1124 423 1143Q423 1152 427 1160L491 1281Q486 1304 465 1300L410 1197Q405 1186 400 1186Q391 1188 389 1205Q389 1215 392 1222L445 1323Q438 1350 418 1342L363 1238Q358 1229 353 1229Q344 1231 342 1248Q342 1257 345 1264L393 1355Q375 1360 357 1335C330 1296 290 1240 262 1195C245 1170 228 1132 215 1110C228 1020 238 960 246 889Z" />
        <path d="M395 851C372 852 350 888 330 930C315 963 307 990 307 1018Q323 1028 340 1008C348 998 352 975 361 974C373 973 385 960 395 954Q404 952 408 961C440 1024 480 1075 510 1124C525 1148 535 1165 541 1179L563 1152C552 1080 535 1000 519 933C495 915 465 892 440 871C425 858 412 850 395 851Z" />
        <path d="M531 879C560 862 595 848 641 847L641 1187L592 1187C575 1080 560 1000 542 925Q538 905 531 879Z" />
      </g>
    </NavIcon>
  );
}

function Clipboards() {
  return (
    <NavIcon viewBox="990 761 345 639" preserveAspectRatio="none" $w={256} $h={256}>
      <g fill={INK}>
        <rect x="1150" y="761" width="184" height="606" rx="24" ry="42" />
        <path d="M1074 810C1076 780 1090 761 1106 762L1120 761H1200V850H1074Z" />
        <rect x="990" y="828" width="230" height="571" rx="25" ry="38" />
      </g>
      <path fill={GREEN} d="M1136 799H1310Q1314 801 1314 808V1320Q1313 1329 1308 1330H1220V880C1220 850 1212 828 1197 828H1162Q1161 803 1149 803H1136Z" />
      <rect x="1010" y="866" width="190" height="495" rx="4" ry="7" fill={GREEN} />
      <g fill={INK}>
        <rect x="1050" y="803" width="112" height="96" rx="13" ry="25" />
        <path d={CHECK} />
        <path d={CHECK} transform="translate(0 214)" />
        <rect x="1102" y="988" width="78" height="38" rx="11" ry="19" />
        <rect x="1030" y="1066" width="150" height="38" rx="11" ry="19" />
        <rect x="1102" y="1202" width="78" height="38" rx="11" ry="19" />
        <rect x="1030" y="1278" width="150" height="38" rx="11" ry="19" />
      </g>
      <path fill={GREEN} d="M1070 841H1085Q1093 838 1093 825Q1094 800 1106 800Q1117 803 1117 822Q1118 838 1127 841H1141V862H1070Z" />
    </NavIcon>
  );
}

function BellIcon() {
  return (
    <NavIcon viewBox="247 761 302 639" preserveAspectRatio="none" $w={225} $h={256}>
      <g fill={INK} fillRule="evenodd">
        <path d="M367 850V815C367 785 380 762 398 762C415 762 427 785 427 815V850ZM388 837H408V815Q407 799 398 799Q388 799 388 815Z" />
        <path d="M398 836C450 836 502 905 502 1025V1090C502 1170 518 1240 544 1290Q549 1298 549 1306Q548 1324 538 1325H258Q247 1323 247 1305Q247 1295 252 1288C278 1240 293 1170 293 1090V1025C293 905 345 836 398 836ZM398 874C355 874 314 930 314 1025V1090C314 1165 300 1230 279 1287H517C493 1230 482 1165 482 1090V1025C482 930 442 874 398 874Z" />
        <path d="M348 1325C352 1370 372 1399 398 1399C424 1399 444 1370 447 1325H426C422 1348 411 1361 398 1361C384 1361 373 1348 369 1325Z" />
        <path d={WAVE} />
        <path d={WAVE} transform="translate(796 0) scale(-1 1)" />
      </g>
    </NavIcon>
  );
}

function MenuIcon() {
  return (
    <NavIcon viewBox="0 0 228 210" $w={228} $h={210} $top={23}>
      <g fill={INK}>
        <rect width="228" height="19" rx="9" />
        <rect y="95.5" width="228" height="19" rx="9" />
        <rect y="191" width="228" height="19" rx="9" />
      </g>
    </NavIcon>
  );
}

export default function App() {
  return (
    <Screen>
      <GlobalStyle />
      <Header>
        <Display width={1249} size={194} line={186} color="#fff" stroke={20} spacing={14}>SAMARIT</Display>
      </Header>
      <OrderBar>
        <Display width={1264} size={85} line={126} stroke={8} spacing={5}>Order #1 - Hämta Post</Display>
      </OrderBar>
      <MapSection>
        <CityMap />
        <MapSide />
        <MapEdge />
      </MapSection>
      <Courier>
        <Avatar viewBox="0 0 268 320">
          <g fill={INK}>
            <circle cx="134" cy="76" r="76.5" />
            <path d="M70 153C78 153 84 158 92 165C104 174 118 178 134 178C150 178 164 174 176 165C184 158 190 153 198 153C230 155 267 190 267 260C267 295 245 318 214 318H54C23 318 1 295 1 260C1 190 38 155 70 153Z" />
          </g>
        </Avatar>
        <CourierText>
          <Display width={766} size={85} line={110} stroke={8} spacing={5}>Olle Svensson</Display>
          <Display width={1466} size={85} line={110} stroke={8} spacing={5}>Picked up order at: 21:12</Display>
        </CourierText>
      </Courier>
      <Chat>
        <ChatMessage own after={52} />
        <ChatMessage after={56} />
        <ChatMessage own after={51} />
        <ChatMessage after={64} />
        <Composer>
          <Display width={704} size={58} line={80} color="#808184" stroke={5} spacing={3}>Write a message...</Display>
        </Composer>
      </Chat>
      <Nav>
        <NavItem><Handshake /></NavItem>
        <NavItem>
          <Active />
          <Clipboards />
          <ActiveFoot />
        </NavItem>
        <NavItem><BellIcon /></NavItem>
        <NavItem><MenuIcon /></NavItem>
      </Nav>
    </Screen>
  );
}
